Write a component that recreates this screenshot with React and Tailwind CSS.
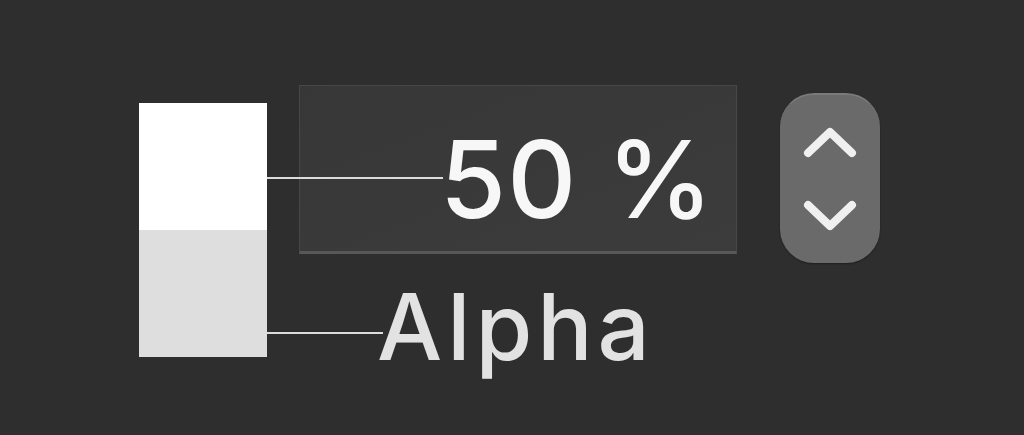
import React from "react";

function Stepper() {
  return (
    <div className="ml-[43px] mt-[8px] h-[170px] w-[100px] rounded-[34px] border-t-2 border-[#7a7a7a] bg-[#6a6a6a] shadow-[0_1px_2px_rgba(0,0,0,0.35)]">
      <svg width="100" height="168" viewBox="0 0 100 168" className="block">
        <path
          d="M28 58 L50 37 L72 58"
          fill="none"
          stroke="#f0f0f0"
          strokeWidth="8"
          strokeLinecap="round"
          strokeLinejoin="round"
        />
        <path
          d="M28 110 L50 131 L72 110"
          fill="none"
          stroke="#f0f0f0"
          strokeWidth="8"
          strokeLinecap="round"
          strokeLinejoin="round"
        />
      </svg>
    </div>
  );
}

export default function App() {
  return (
    <div
      className="relative h-[435px] w-[1024px] overflow-hidden bg-[#2e2e2e]"
      style={{ fontFamily: 'Inter, "Liberation Sans", Arial, sans-serif' }}
    >
      <div className="flex items-start pl-[139px] pt-[85px]">
        {/* colour swatch */}
        <div className="mt-[18px] flex h-[254px] w-[128px] flex-col">
          <div className="h-[127px] bg-white" />
          <div className="flex-1 bg-[#dedede]" />
        </div>

        <div className="ml-[32px] flex flex-col">
          {/* value field */}
          <div className="h-[169px] w-[438px] border border-b-[3px] border-[#474747] border-b-[#585858] bg-gradient-to-br from-[#373737] to-[#3c3c3c]">
            <div className="pl-[140px] pt-[40px] text-[107px] font-medium leading-none tracking-[1px] text-[#f7f7f7]">
              50 %
            </div>
          </div>
          {/* label */}
          <div className="ml-[78px] mt-[27px] text-[92px] font-medium leading-none tracking-[5px] text-[#e2e2e2]">
            Alpha
          </div>
        </div>

        <Stepper />
      </div>

      {/* connector lines */}
      <div className="absolute left-[267px] top-[177px] h-[2px] w-[176px] bg-[#dcdcdc]" />
      <div className="absolute left-[267px] top-[332px] h-[2px] w-[116px] bg-[#dcdcdc]" />
    </div>
  );
}
